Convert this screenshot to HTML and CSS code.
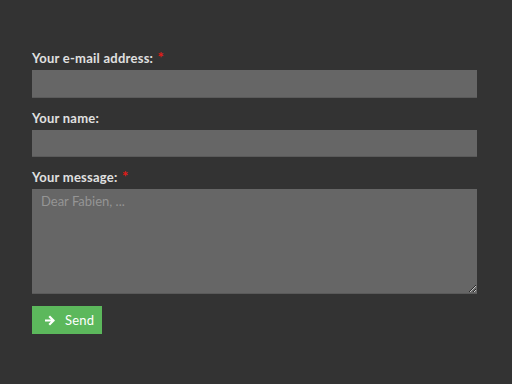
FILE: index.html
```html
<!DOCTYPE html>
<html>
<head>
<meta charset="utf-8">
<link rel="stylesheet" href="styles.css">
</head>
<body>
<form class="form">
  <div class="field">
    <label class="label">Your e-mail address: <span class="req">*</span></label>
    <input class="input" type="email">
  </div>
  <div class="field">
    <label class="label">Your name:</label>
    <input class="input" type="text">
  </div>
  <div class="field">
    <label class="label">Your message: <span class="req">*</span></label>
    <textarea class="input textarea" placeholder="Dear Fabien, ..."></textarea>
  </div>
  <div class="actions">
    <button class="btn" type="button">
      <svg class="icon" width="10" height="11" viewBox="0 0 10 11"><path d="M1 5.5H8.2M5 2L8.5 5.5L5 9" fill="none" stroke="#fff" stroke-width="2.2" stroke-linecap="square"/></svg>
      <span>Send</span>
    </button>
  </div>
</form>
</body>
</html>
```
FILE: styles.css
```css
html, body {
  margin: 0;
  background: #333333;
}
body {
  font-family: Lato, "Open Sans", sans-serif;
}
.form {
  padding: 50px 35px 0 32px;
  display: flex;
  flex-direction: column;
  gap: 12px;
}
.field {
  display: flex;
  flex-direction: column;
  gap: 4px;
}
.label {
  font-size: 13px;
  line-height: 16px;
  height: 16px;
  font-weight: bold;
  letter-spacing: 0.25px;
  color: #e0e0e0;
}
.req {
  color: #e41b17;
  font-size: 15px;
  line-height: 0;
  margin-left: 1px;
}
.input {
  box-sizing: border-box;
  height: 27.5px;
  margin: 0;
  background: #666666;
  border: none;
  border-bottom: 1px solid #5a5a5a;
  color: #eee;
  font-family: Lato, sans-serif;
  font-size: 13px;
  padding: 4px 9px;
  outline: none;
}
.textarea {
  height: 105px;
  resize: vertical;
  padding: 4px 9px;
  display: block;
}
.textarea::placeholder {
  color: #959595;
}
.btn {
  display: flex;
  align-items: center;
  gap: 10px;
  height: 28px;
  width: 70px;
  padding: 0 0 0 13px;
  background: #5cb85c;
  border: none;
  color: #fff;
  font-family: Lato, sans-serif;
  font-size: 13px;
  letter-spacing: 0.2px;
}
.icon {
  display: block;
}
```
